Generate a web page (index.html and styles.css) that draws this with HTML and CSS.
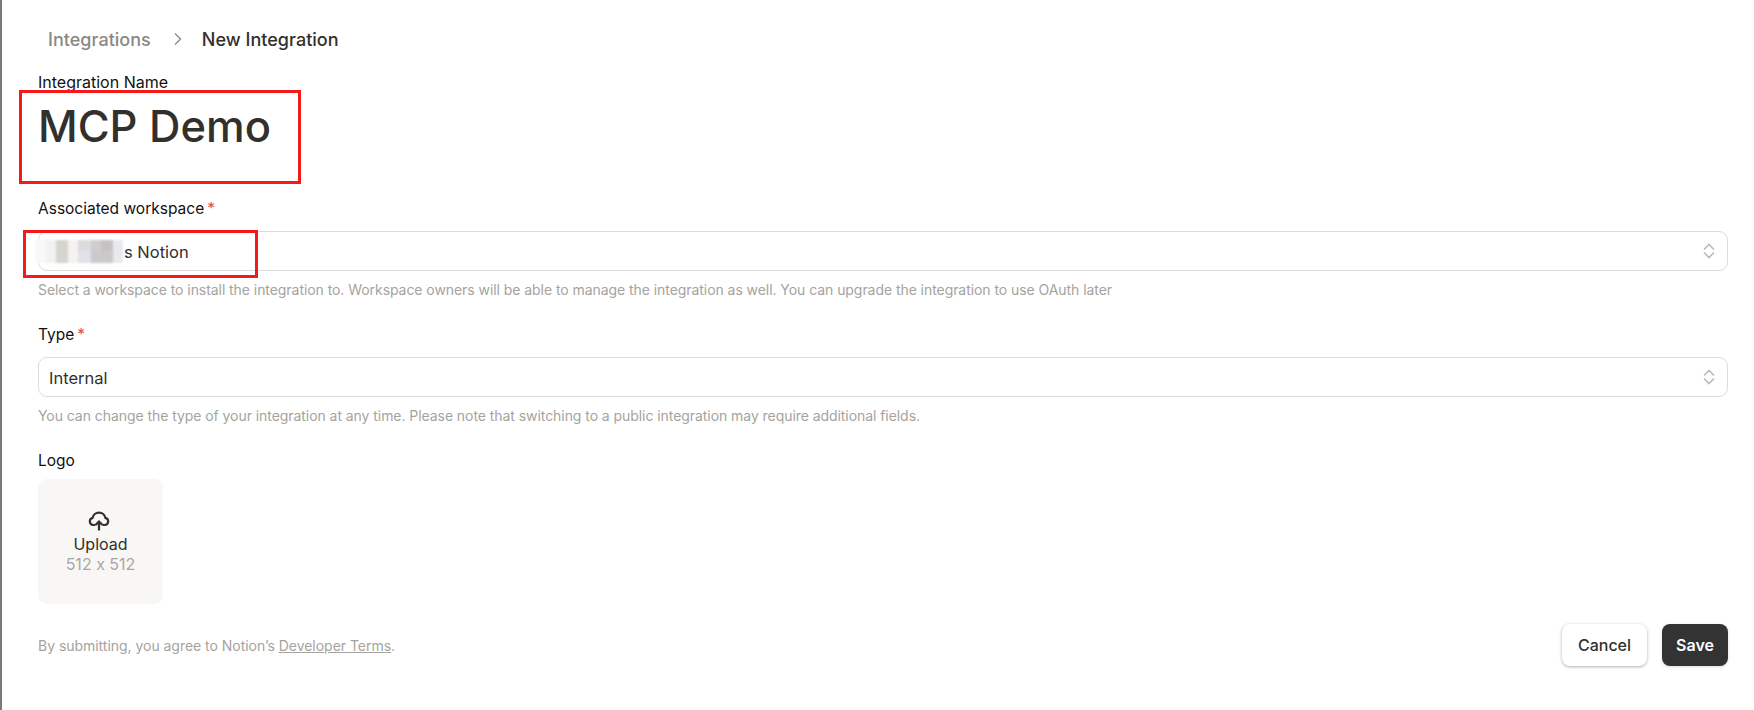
FILE: index.html
```html
<!DOCTYPE html>
<html lang="en">
<head>
<meta charset="utf-8">
<title>New Integration</title>
<link rel="stylesheet" href="styles.css">
</head>
<body>
<div class="page">
  <nav class="crumbs">
    <span class="crumb-link">Integrations</span>
    <svg class="crumb-sep" width="16" height="16" viewBox="0 0 16 16"><path d="M5 2.500 10.500 8 5 13.500" fill="none" stroke="#8a8885" stroke-width="1.300"/></svg>
    <span class="crumb-current">New Integration</span>
  </nav>
  <form class="form">
    <div class="name-field">
      <div class="label name-label">Integration Name</div>
      <div class="name-value">MCP Demo</div>
      <div class="mark mark-name"></div>
    </div>
    <div class="field">
      <div class="label">Associated workspace<span class="req">*</span></div>
      <div class="select">
        <span class="ws-value">s Notion</span>
        <svg class="chev" width="14" height="18" viewBox="0 0 14 18"><path d="M2 7.500 7 2.500 12 7.500M2 10.500 7 15.500 12 10.500" fill="none" stroke="#bdbbb8" stroke-width="1.600"/></svg>
        <div class="mask">
          <i class="c1"></i><i class="c2"></i><i class="c3"></i><i class="c4"></i><i class="c5"></i><i class="c6"></i><i class="c7"></i><i class="c8"></i>
        </div>
        <div class="mark mark-ws"></div>
      </div>
      <p class="hint">Select a workspace to install the integration to. Workspace owners will be able to manage the integration as well. You can upgrade the integration to use OAuth later</p>
    </div>
    <div class="field">
      <div class="label">Type<span class="req">*</span></div>
      <div class="select">
        <span>Internal</span>
        <svg class="chev" width="14" height="18" viewBox="0 0 14 18"><path d="M2 7.500 7 2.500 12 7.500M2 10.500 7 15.500 12 10.500" fill="none" stroke="#bdbbb8" stroke-width="1.600"/></svg>
      </div>
      <p class="hint">You can change the type of your integration at any time. Please note that switching to a public integration may require additional fields.</p>
    </div>
    <div class="logo-field">
      <div class="label">Logo</div>
      <div class="upload">
        <svg class="up-icon" width="22" height="22" viewBox="0 0 22 22"><path d="M7.500 16H5.200A3.600 3.600 0 0 1 4.600 8.900 A6.500 6.500 0 0 1 17.400 8.900 A3.600 3.600 0 0 1 16.800 16H14.500" fill="none" stroke="#32302c" stroke-width="2.200"/><path d="M11 21.500V13M7.500 16 11 12.500 14.500 16" fill="none" stroke="#32302c" stroke-width="2.200"/></svg>
        <span class="up-title">Upload</span>
        <span class="up-size">512 x 512</span>
      </div>
    </div>
    <footer class="foot">
      <p class="terms">By submitting, you agree to Notion’s <a class="terms-link">Developer Terms</a>.</p>
      <div class="actions">
        <button type="button" class="btn btn-cancel">Cancel</button>
        <button type="button" class="btn btn-save">Save</button>
      </div>
    </footer>
  </form>
</div>
</body>
</html>
```
FILE: styles.css
```css
* { box-sizing: border-box; }
html, body { margin: 0; height: 100%; }
body {
  background: #fff;
  font-family: Inter, "Noto Sans", sans-serif;
  font-feature-settings: "calt" 0;
  color: #32302c;
  border-left: 2px solid #7a7a7a;
  overflow: hidden;
}
.page { padding: 25px 26px 0 36px; }
.crumbs {
  display: flex;
  align-items: center;
  height: 28px;
  padding-left: 10px;
  font-size: 18px;
  font-weight: 500;
  letter-spacing: 0.02px;
}
.crumb-link { color: #8a8885; }
.crumb-sep { margin: 0 16px 0 19px; }
.crumb-current { color: #32302c; }
.label { font-size: 15.500px; line-height: 20px; padding-top: 1px; height: 20px; color: #111; }
.name-label { font-size: 16px; padding-top: 0; }
.req { color: #e5484d; margin-left: 3px; }
.name-field { position: relative; height: 126px; margin-top: 19px; }
.name-value { font-size: 43.500px; font-weight: 500; line-height: 54px; margin-top: 7px; }
.mark { position: absolute; border: 3px solid #f41a1a; pointer-events: none; }
.mark-name { left: -19px; top: 18px; width: 282px; height: 94px; }
.mark-ws { left: -16px; top: -2px; width: 235px; height: 48px; }
.field { margin-bottom: 25px; }
.select {
  position: relative;
  display: flex;
  align-items: center;
  justify-content: space-between;
  height: 40px;
  margin-top: 13px;
  padding: 2px 10px 0;
  border: 1px solid #dedcd9;
  border-radius: 9px;
  font-size: 16.500px;
  color: #32302c;
}
.ws-value { padding-left: 75px; }
.chev { margin-right: 1px; margin-top: -2px; }
.mask {
  position: absolute;
  left: -4px;
  top: 8px;
  display: flex;
  height: 23px;
  filter: blur(1px);
}
.mask i { display: block; height: 23px; }
.c1 { width: 11px; background: #f8f8f8; }
.c2 { width: 10px; background: #f1f2f1; }
.c3 { width: 12px; background: #d5d4ce; }
.c4 { width: 10px; background: #f4f3f1; }
.c5 { width: 13px; background: linear-gradient(#dcdbdc 50%, #e0e2e8 50%); }
.c6 { width: 10px; background: linear-gradient(#d0cdce 50%, #c9c9ce 50%); }
.c7 { width: 12px; background: linear-gradient(#c6c2c4 50%, #cdc9ca 50%); }
.c8 { width: 10px; background: #e8eaee; }
.hint { margin: 10px 0 0; font-size: 14px; line-height: 18px; letter-spacing: -0.06px; color: #a5a3a0; }
.upload {
  display: flex;
  flex-direction: column;
  align-items: center;
  justify-content: center;
  width: 125px;
  height: 125px;
  margin-top: 9px;
  background: #f8f7f5;
  border-radius: 9px;
}
.up-icon { margin-left: -4px; margin-bottom: 2px; }
.up-title { font-size: 16px; line-height: 20px; margin-top: 1px; color: #32302c; }
.up-size { font-size: 16px; line-height: 21px; color: #a9a7a4; }
.foot { display: flex; align-items: center; justify-content: space-between; margin-top: 20px; }
.terms { margin: 0; font-size: 14px; letter-spacing: -0.03px; color: #a5a3a0; }
.terms-link { text-decoration: underline; }
.actions { display: flex; gap: 15px; }
.btn { height: 42px; border: 0; border-radius: 8px; font-family: inherit; font-size: 16px; font-weight: 600; }
.btn-cancel { width: 85px; background: #fff; color: #32302c; font-weight: 500; box-shadow: 0 1px 3px rgba(0,0,0,.28), 0 0 5px rgba(0,0,0,.06); }
.btn-save { width: 66px; background: #333; color: #fff; box-shadow: 0 1px 3px rgba(0,0,0,.15); }
```
